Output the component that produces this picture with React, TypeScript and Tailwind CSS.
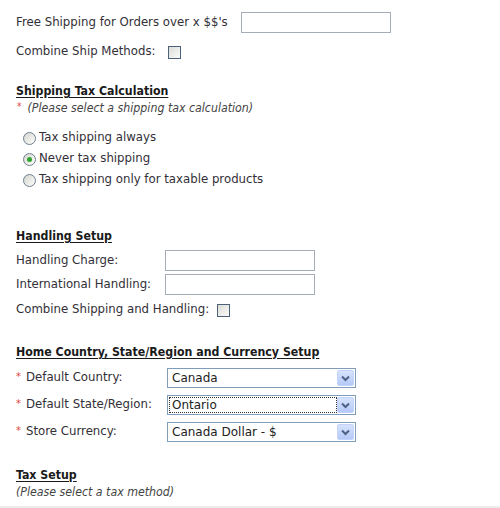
import React from "react";

const font = { fontFamily: '"DejaVu Sans", Verdana, sans-serif' };
const cond = { fontFamily: '"DejaVu Sans Condensed", "DejaVu Sans", Verdana, sans-serif' };

function TextInput({ w }: { w: string }) {
  return <div className={`${w} h-[21px] border border-[#a5acb8] bg-white`} />;
}

function Checkbox() {
  return (
    <div className="w-[13px] h-[13px] border border-[#4b6178] bg-gradient-to-br from-[#dcdcd7] to-[#fbfbf9]" />
  );
}

function Radio({ checked }: { checked?: boolean }) {
  return (
    <div className="w-[13px] h-[13px] rounded-full border border-[#6e7f90] bg-gradient-to-br from-[#d6d6d0] to-[#fdfdfb] flex items-center justify-center">
      {checked && <div className="w-[5px] h-[5px] rounded-full bg-[#2da52d]" />}
    </div>
  );
}

function Select({ value, focused }: { value: string; focused?: boolean }) {
  return (
    <div className="w-[189px] h-[20px] border border-[#7f9db9] bg-white flex items-stretch p-[1px]">
      <div className="flex-1 flex items-center pl-[3px] relative">
        {focused && <div className="absolute inset-0 border border-dotted border-[#333]" />}
        <span className="text-[12px] text-[#222]">{value}</span>
      </div>
      <div className="w-[17px] flex items-center justify-center bg-gradient-to-b from-[#d7e3fd] to-[#b5c9f8] border border-[#c3d3fd] rounded-[2px]">
        <svg width="9" height="7" viewBox="0 0 9 7">
          <path d="M1 1.5 L4.5 5 L8 1.5" fill="none" stroke="#4d6185" strokeWidth="2" />
        </svg>
      </div>
    </div>
  );
}

function Heading({ children, mt }: { children: React.ReactNode; mt: string }) {
  return (
    <div className={`${mt} h-[16px] flex items-center`} style={cond}>
      <span className="font-bold underline underline-offset-[2px] text-[12.25px] text-[#1a1a1a]">{children}</span>
    </div>
  );
}

function Star() {
  return <span className="text-[#e0443c] text-[10px] mr-[5px] relative top-[-2px]">*</span>;
}

export default function App() {
  return (
    <div className="w-[500px] h-[508px] bg-white flex flex-col text-[11.75px] text-[#332f38]" style={font}>
      <div className="pl-[16px] flex flex-col flex-1">
        <div className="mt-[12px] h-[21px] flex items-center">
          <span className="w-[225px]">Free Shipping for Orders over x $$'s</span>
          <TextInput w="w-[150px]" />
        </div>
        <div className="mt-[9px] h-[20px] flex items-center">
          <span className="w-[152px]">Combine Ship Methods:</span>
          <Checkbox />
        </div>

        <Heading mt="mt-[21px]">Shipping Tax Calculation</Heading>
        <div className="mt-[1px] h-[16px] flex items-center text-[12.25px]" style={cond}>
          <span className="text-[#e0443c] text-[10px] mr-[6px] ml-[1px] relative top-[-2px]">*</span>
          <span className="italic text-[#444]">(Please select a shipping tax calculation)</span>
        </div>

        <div className="mt-[12px] flex flex-col gap-[1px] pl-[7px]">
          <div className="h-[20px] flex items-center gap-[3px]">
            <Radio />
            <span>Tax shipping always</span>
          </div>
          <div className="h-[20px] flex items-center gap-[3px]">
            <Radio checked />
            <span>Never tax shipping</span>
          </div>
          <div className="h-[20px] flex items-center gap-[3px]">
            <Radio />
            <span>Tax shipping only for taxable products</span>
          </div>
        </div>

        <Heading mt="mt-[38px]">Handling Setup</Heading>
        <div className="mt-[6px] h-[21px] flex items-center">
          <span className="w-[149px]">Handling Charge:</span>
          <TextInput w="w-[150px]" />
        </div>
        <div className="mt-[3px] h-[21px] flex items-center">
          <span className="w-[149px]">International Handling:</span>
          <TextInput w="w-[150px]" />
        </div>
        <div className="mt-[5px] h-[20px] flex items-center">
          <span className="w-[201px]">Combine Shipping and Handling:</span>
          <Checkbox />
        </div>

        <Heading mt="mt-[24px]">Home Country, State/Region and Currency Setup</Heading>
        <div className="mt-[8px] h-[20px] flex items-center">
          <span className="w-[151px] flex items-center"><Star />Default Country:</span>
          <Select value="Canada" />
        </div>
        <div className="mt-[7px] h-[20px] flex items-center">
          <span className="w-[151px] flex items-center"><Star />Default State/Region:</span>
          <Select value="Ontario" focused />
        </div>
        <div className="mt-[7px] h-[20px] flex items-center">
          <span className="w-[151px] flex items-center"><Star />Store Currency:</span>
          <Select value="Canada Dollar - $" />
        </div>

        <Heading mt="mt-[25px]">Tax Setup</Heading>
        <div className="mt-[1px] h-[16px] flex items-center text-[12.25px]" style={cond}>
          <span className="italic text-[#444]">(Please select a tax method)</span>
        </div>
        <div className="flex-1" />
      </div>
      <div className="h-[2px] bg-[#ededed]" />
    </div>
  );
}
